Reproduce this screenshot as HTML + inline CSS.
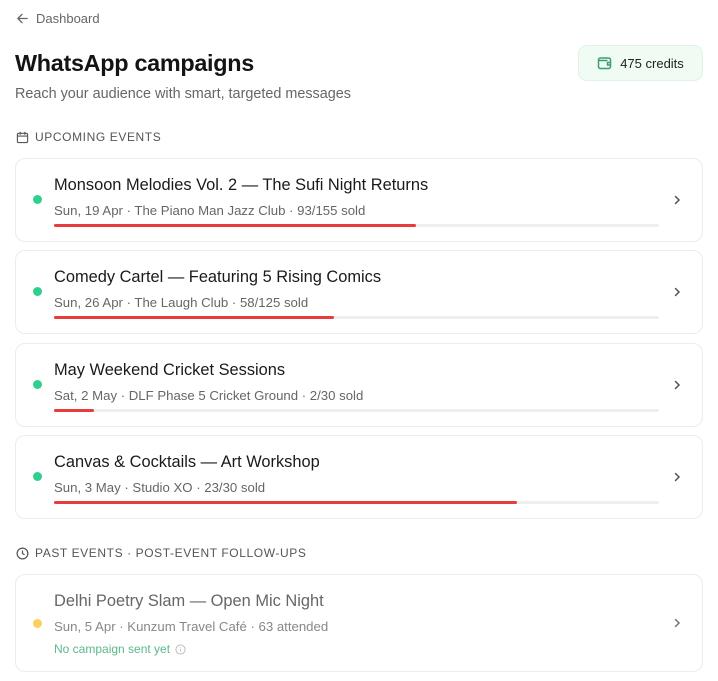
<!DOCTYPE html>
<html><head><meta charset="utf-8"><style>
*{box-sizing:border-box;margin:0;padding:0}
body{width:718px;height:681px;background:#fff;font-family:"Liberation Sans",sans-serif;color:#1a1a1a;position:relative;overflow:hidden}
.abs{position:absolute}
.back{left:16px;top:11px;font-size:13px;color:#666;display:flex;align-items:center;gap:7px}
h1{position:absolute;left:15px;top:50px;font-size:23.4px;font-weight:bold;color:#141414;letter-spacing:-0.3px}
.sub{left:15px;top:86px;font-size:14.4px;color:#666}
.credits{left:578px;top:45px;width:125px;height:36px;background:#effbf3;border:1px solid #dff2e6;border-radius:9px;font-size:13px;color:#222;display:flex;align-items:center;justify-content:center;gap:8px}
.sec{left:16px;font-size:12px;letter-spacing:0.6px;color:#555;display:flex;align-items:center;gap:6px}
.card{position:absolute;left:15px;width:688px;border:1px solid #ececec;border-radius:10px;background:#fff}
.card .t{position:absolute;left:38px;top:17px;font-size:16.4px;color:#1a1a1a}
.card .m{position:absolute;left:38px;top:44px;font-size:13.2px;color:#666}
.card .dot{position:absolute;left:17px;width:9px;height:9px;border-radius:50%;background:#2fcf8d}
.card .bar{position:absolute;left:38px;top:65px;width:605px;height:3px;background:#eee;border-radius:2px}
.card .bar i{display:block;height:3px;background:#e83b3b;border-radius:2px}
.card .ch{position:absolute;right:20px;width:10px;height:10px}
</style></head><body>
<div class="abs back"><svg width="13" height="13" viewBox="0 0 14 14" fill="none" stroke="#666" stroke-width="1.4" stroke-linecap="round" stroke-linejoin="round"><path d="M12 7H2M6.5 2.5L2 7l4.5 4.5"/></svg>Dashboard</div>
<h1>WhatsApp campaigns</h1>
<div class="abs sub">Reach your audience with smart, targeted messages</div>
<div class="abs credits"><svg width="15" height="14" viewBox="0 0 15 14" fill="none" stroke="#3a9e6e" stroke-width="1.5"><rect x="1.5" y="2" width="12" height="10.5" rx="2"/><path d="M13.5 6.5h-3v2.5h3"/><path d="M1.5 4.5h9"/></svg>475 credits</div>
<div class="abs sec" style="top:130px"><svg width="13" height="13" viewBox="0 0 14 14" fill="none" stroke="#555" stroke-width="1.2"><rect x="1.5" y="2.5" width="11" height="10" rx="1.5"/><path d="M1.5 5.5h11M4.5 1v3M9.5 1v3"/></svg>UPCOMING EVENTS</div>

<div class="card" style="top:158px;height:84px"><div class="dot" style="top:36px"></div><div class="t">Monsoon Melodies Vol. 2 — The Sufi Night Returns</div><div class="m">Sun, 19 Apr · The Piano Man Jazz Club · 93/155 sold</div><div class="bar"><i style="width:362px"></i></div><svg class="ch" style="top:36px" viewBox="0 0 10 10" fill="none" stroke="#555" stroke-width="1.5" stroke-linecap="round"><path d="M3.5 1.5L7 5l-3.5 3.5"/></svg></div>
<div class="card" style="top:250px;height:84px"><div class="dot" style="top:36px"></div><div class="t">Comedy Cartel — Featuring 5 Rising Comics</div><div class="m">Sun, 26 Apr · The Laugh Club · 58/125 sold</div><div class="bar"><i style="width:280px"></i></div><svg class="ch" style="top:36px" viewBox="0 0 10 10" fill="none" stroke="#555" stroke-width="1.5" stroke-linecap="round"><path d="M3.5 1.5L7 5l-3.5 3.5"/></svg></div>
<div class="card" style="top:343px;height:84px"><div class="dot" style="top:36px"></div><div class="t">May Weekend Cricket Sessions</div><div class="m">Sat, 2 May · DLF Phase 5 Cricket Ground · 2/30 sold</div><div class="bar"><i style="width:40px"></i></div><svg class="ch" style="top:36px" viewBox="0 0 10 10" fill="none" stroke="#555" stroke-width="1.5" stroke-linecap="round"><path d="M3.5 1.5L7 5l-3.5 3.5"/></svg></div>
<div class="card" style="top:435px;height:84px"><div class="dot" style="top:36px"></div><div class="t">Canvas &amp; Cocktails — Art Workshop</div><div class="m">Sun, 3 May · Studio XO · 23/30 sold</div><div class="bar"><i style="width:463px"></i></div><svg class="ch" style="top:36px" viewBox="0 0 10 10" fill="none" stroke="#555" stroke-width="1.5" stroke-linecap="round"><path d="M3.5 1.5L7 5l-3.5 3.5"/></svg></div>

<div class="abs sec" style="top:546px"><svg width="13" height="13" viewBox="0 0 14 14" fill="none" stroke="#555" stroke-width="1.3"><circle cx="7" cy="7" r="5.8"/><path d="M7 3.8V7l2.2 1.4"/></svg>PAST EVENTS · POST-EVENT FOLLOW-UPS</div>
<div class="card" style="top:574px;height:98px"><div class="dot" style="top:44px;background:#fcd060"></div><div class="t" style="color:#666">Delhi Poetry Slam — Open Mic Night</div><div class="m" style="color:#888">Sun, 5 Apr · Kunzum Travel Café · 63 attended</div><div class="abs" style="left:38px;top:67px;font-size:12px;color:#5bb98a;display:flex;align-items:center;gap:5px">No campaign sent yet <svg width="11" height="11" viewBox="0 0 12 12" fill="none" stroke="#bbb" stroke-width="1"><circle cx="6" cy="6" r="5"/><path d="M6 5.3v3M6 3.5v.6"/></svg></div><svg class="ch" style="top:43px" viewBox="0 0 10 10" fill="none" stroke="#777" stroke-width="1.5" stroke-linecap="round"><path d="M3.5 1.5L7 5l-3.5 3.5"/></svg></div>
</body></html>
